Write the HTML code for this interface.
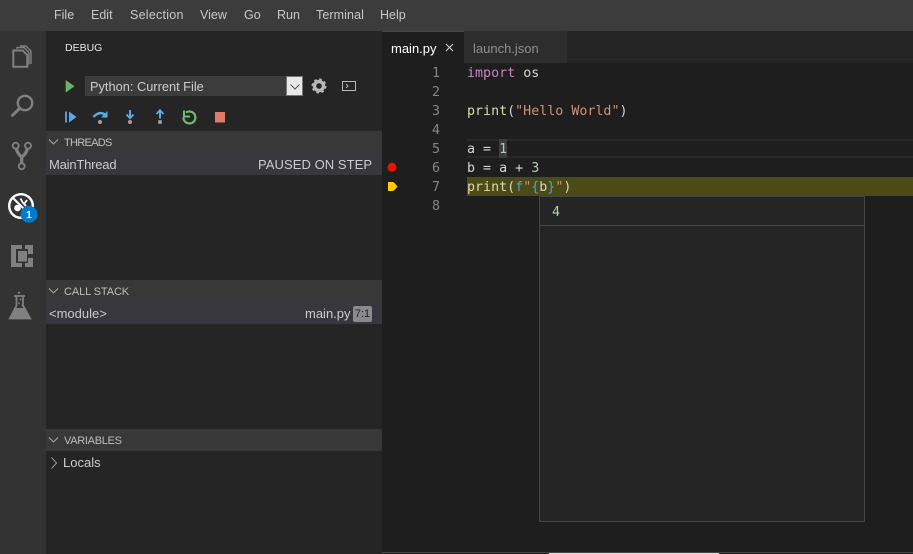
<!DOCTYPE html>
<html><head><meta charset="utf-8"><style>
html,body{margin:0;padding:0;background:#1e1e1e}
#r{position:relative;width:913px;height:554px;overflow:hidden;background:#1e1e1e;font-family:"Liberation Sans",sans-serif;font-size:13px;color:#ccc}
#r div,#r svg{position:absolute}
.t{white-space:pre}
.m{top:8px;font-size:12.5px;color:#c8c8c8;white-space:pre}
.h{left:46px;width:336px;height:22px;background:#383838}
.ht{left:64px;font-size:11px;color:#bdbdbd;white-space:pre}
.code{left:467px;font-family:"DejaVu Sans Mono",monospace;font-size:13.33px;line-height:19px;height:19px;white-space:pre;color:#d4d4d4}
.ln{left:399px;width:41px;text-align:right;font-family:"DejaVu Sans Mono",monospace;font-size:13.33px;line-height:19px;color:#858585}
.kw{color:#c586c0}.fn{color:#dcdcaa}.st{color:#ce9178}.nu{color:#b5cea8}.va{color:#d4d4d4}.bl{color:#569cd6}
</style></head><body><div id="r">
<div style="left:0;top:0;width:913px;height:31px;background:#3c3c3c"></div>
<div class="m" style="left:54px">File</div><div class="m" style="left:91px">Edit</div><div class="m" style="left:130px;letter-spacing:.25px">Selection</div><div class="m" style="left:200px">View</div><div class="m" style="left:244px">Go</div><div class="m" style="left:277px">Run</div><div class="m" style="left:316px;letter-spacing:.1px">Terminal</div><div class="m" style="left:380px">Help</div>

<div style="left:0;top:31px;width:46px;height:523px;background:#333"></div>
<svg style="left:0;top:0" width="46" height="340" fill="none" stroke="#808080">
<path d="M13.300 50.500h9.500l4.500 4.500v11.800H13.300z" stroke-width="2"/><path d="M17 49v-1.500h7l5 5v12" stroke-width="1.400"/><path d="M20 46h6l5 5v13" stroke-width="1.400"/>
<circle cx="25" cy="103" r="7.200" stroke-width="2.400"/><path d="M19 109l-6.500 6.300" stroke-width="3" stroke-linecap="round"/>
<g stroke-width="1.800"><circle cx="15.700" cy="145.700" r="3"/><circle cx="28" cy="145.700" r="3"/><circle cx="21.700" cy="166.300" r="3"/></g>
<path d="M16.500 149q1 5 5.200 8q4.500-3 5.500-8M21.700 156v7" stroke-width="3.200"/>
<g fill="#808080" stroke="none"><path d="M11 245h11v4h-6v14h6v4H11zM25 245h8v9h-5v-5h-3zM28 258h5v9h-8v-4h3z"/><rect x="18" y="251" width="9" height="10.500"/></g>
<circle cx="19" cy="292.700" r="1.100" fill="#808080" stroke="none"/>
<path d="M14 296h11M16.500 296v9.500L9.800 318.500h20.400L23 305.500V296" stroke-width="1.800"/>
<path d="M14.500 308h11l5.500 11H9z" fill="#808080" stroke="none"/>
<g fill="#808080" stroke="none"><circle cx="20.500" cy="299.500" r="1"/><circle cx="19" cy="303.300" r=".9"/><circle cx="22.500" cy="305.500" r="1"/></g>
</svg>
<svg style="left:0;top:0" width="46" height="230">
<circle cx="21" cy="206" r="11.800" fill="none" stroke="#fff" stroke-width="2.400"/><path d="M12.500 197.500l17 17" stroke="#fff" stroke-width="2"/><circle cx="17.500" cy="208" r="3.300" fill="#fff"/><path d="M20.500 198.500l2.500 4.500M27 200l-2.500 3.500M23 203l3 3" stroke="#fff" stroke-width="1.800"/>
<circle cx="29" cy="214.300" r="8.500" fill="#007acc"/><text x="29" y="218" font-family="Liberation Sans" font-size="10" font-weight="700" fill="#fff" text-anchor="middle">1</text></svg>

<div style="left:46px;top:31px;width:336px;height:523px;background:#252526"></div>
<div class="t" style="left:65px;top:42px;font-size:10.500px;color:#e7e7e7">DEBUG</div>
<svg style="left:65px;top:79px" width="12" height="15"><path d="M.7 1l8.800 6.200L.7 13.500z" fill="#6ab56a"/></svg>
<div style="left:85px;top:76px;width:218px;height:20px;background:#3c3c3c"></div>
<div class="t" style="left:90px;top:79px;font-size:12.800px;color:#ccc">Python: Current File</div>
<div style="left:286px;top:76px;width:15px;height:18px;background:#e8e8e8;border:1px solid #777"></div>
<svg style="left:286px;top:76px" width="18" height="20" fill="none" stroke="#555" stroke-width="1"><path d="M4.500 8.500l4.500 4.500 4.500-4.500"/></svg>
<svg style="left:311px;top:78px" width="16" height="16"><circle cx="8" cy="8" r="4.500" fill="none" stroke="#b8b8b8" stroke-width="3.400"/><circle cx="8" cy="8" r="6.500" fill="none" stroke="#b8b8b8" stroke-width="2" stroke-dasharray="2.600 2.500"/></svg>
<svg style="left:342px;top:81px" width="15" height="11" fill="none" stroke="#b8b8b8"><rect x=".5" y=".5" width="13" height="9"/><path d="M4 3l2 2-2 2" stroke-width=".9"/></svg>

<svg style="left:46px;top:105px" width="190" height="24">
<path d="M20 6.500v11" stroke="#5fa8e8" stroke-width="1.800"/><path d="M23 6.500l7.500 5.500-7.500 5.500z" fill="#5fa8e8"/>
<path d="M47.500 12q6-7 13-1.500" fill="none" stroke="#5fa8e8" stroke-width="2.400"/><path d="M55 12.500h6.500V6z" fill="#5fa8e8"/><circle cx="54" cy="17" r="2" fill="#a0a0a0"/>
<path d="M84 5v8" stroke="#5fa8e8" stroke-width="2"/><path d="M80.500 9.500l3.500 3.800 3.500-3.800" fill="none" stroke="#5fa8e8" stroke-width="1.800"/><circle cx="84" cy="17" r="2" fill="#a0a0a0"/>
<path d="M114 6v7.500" stroke="#5fa8e8" stroke-width="2"/><path d="M110.500 9l3.500-3.800 3.500 3.800" fill="none" stroke="#5fa8e8" stroke-width="1.800"/><circle cx="114" cy="17" r="2" fill="#a0a0a0"/>
<path d="M140 7.500a6 6 0 1 1-2.600 5" fill="none" stroke="#75b973" stroke-width="2.200"/><path d="M138 5.500v6h6" fill="none" stroke="#75b973" stroke-width="2"/>
<rect x="169" y="7" width="10" height="10.500" fill="#e07b69"/>
</svg>

<div class="h" style="top:131px"></div>
<div style="left:46px;top:153px;width:336px;height:22px;background:#37373d"></div>
<svg style="left:48px;top:137px" width="14" height="10" fill="none" stroke="#b0b0b0" stroke-width=".9"><path d="M1 2.500l4.500 4.500 4.500-4.500"/></svg>
<div class="ht" style="top:137px;letter-spacing:-.7px">THREADS</div>
<div class="t" style="left:49px;top:157px;font-size:13px;letter-spacing:-.2px;color:#ccc">MainThread</div>
<div class="t" style="left:258px;top:157px;font-size:13px;letter-spacing:.07px;color:#ccc">PAUSED ON STEP</div>

<div class="h" style="top:280px"></div>
<div style="left:46px;top:302px;width:336px;height:22px;background:#37373d"></div>
<svg style="left:48px;top:286px" width="14" height="10" fill="none" stroke="#b0b0b0" stroke-width=".9"><path d="M1 2.500l4.500 4.500 4.500-4.500"/></svg>
<div class="ht" style="top:286px;letter-spacing:-.1px">CALL STACK</div>
<div class="t" style="left:49px;top:306px;font-size:13px;color:#ccc">&lt;module&gt;</div>
<div class="t" style="left:305px;top:306px;font-size:13px;color:#ccc">main.py</div>
<div class="t" style="left:353px;top:306px;width:19px;height:16px;background:#8a8a8a;border-radius:2px;color:#222;font-size:11px;line-height:16px;text-align:center">7:1</div>

<div class="h" style="top:429px"></div>
<svg style="left:48px;top:435px" width="14" height="10" fill="none" stroke="#b0b0b0" stroke-width=".9"><path d="M1 2.500l4.500 4.500 4.500-4.500"/></svg>
<div class="ht" style="top:435px;letter-spacing:-.3px">VARIABLES</div>
<svg style="left:49px;top:456px" width="10" height="14" fill="none" stroke="#b0b0b0" stroke-width=".9"><path d="M2.500 1.500l5 5.500-5 5.500"/></svg>
<div class="t" style="left:63px;top:455px;font-size:13px;color:#ccc">Locals</div>

<div style="left:382px;top:31px;width:531px;height:32px;background:#252526"></div>
<div style="left:382px;top:31px;width:82px;height:32px;background:#1e1e1e"></div>
<div style="left:382px;top:31px;width:82px;height:1px;background:#0b5a8f"></div>
<div style="left:464px;top:31px;width:103px;height:32px;background:#2d2d2d"></div>
<div class="t" style="left:391px;top:41px;font-size:13px;color:#fff">main.py</div>
<svg style="left:445px;top:43px" width="9" height="9" stroke="#ccc" stroke-width="1.100"><path d="M1 1l7 7M8 1l-7 7"/></svg>
<div class="t" style="left:473px;top:41px;font-size:13px;color:#8f8f8f">launch.json</div>

<div style="left:467px;top:139px;width:446px;height:19px;box-sizing:border-box;border-top:2px solid #282828;border-bottom:2px solid #282828"></div>
<div style="left:499px;top:139px;width:8px;height:19px;background:#3a3d41"></div>
<div style="left:467px;top:177px;width:446px;height:19px;background:#4b4b18"></div>

<div class="ln" style="top:64px">1</div><div class="ln" style="top:83px">2</div><div class="ln" style="top:102px">3</div><div class="ln" style="top:121px">4</div><div class="ln" style="top:140px">5</div><div class="ln" style="top:159px">6</div><div class="ln" style="top:178px">7</div><div class="ln" style="top:197px">8</div>
<svg style="left:386px;top:161px" width="14" height="34"><circle cx="6" cy="6.300" r="4.500" fill="#e51400"/><path d="M2 21h4.500q1 0 2 1l3 3.500-3 3.500q-1 1-2 1H2z" fill="#ffcc00"/></svg>

<div class="code" style="top:64px"><span class="kw">import</span> <span class="va">os</span></div>
<div class="code" style="top:102px"><span class="fn">print</span>(<span class="st">"Hello World"</span>)</div>
<div class="code" style="top:140px"><span class="va">a</span> = <span class="nu">1</span></div>
<div class="code" style="top:159px"><span class="va">b</span> = <span class="va">a</span> + <span class="nu">3</span></div>
<div class="code" style="top:178px"><span class="fn">print</span>(<span class="bl">f</span><span class="st">"</span><span class="bl">{</span><span class="va">b</span><span class="bl">}</span><span class="st">"</span>)</div>

<div style="left:539px;top:196px;width:326px;height:326px;box-sizing:border-box;background:#252526;border:1px solid #454545"></div>
<div style="left:540px;top:225px;width:324px;height:1px;background:#454545"></div>
<div class="code" style="left:552px;top:203px;color:#b5cea8">4</div>

<div style="left:382px;top:552px;width:531px;height:1px;background:#444"></div>
<div style="left:549px;top:553px;width:170px;height:1px;background:#ddd"></div>
</div></body></html>
